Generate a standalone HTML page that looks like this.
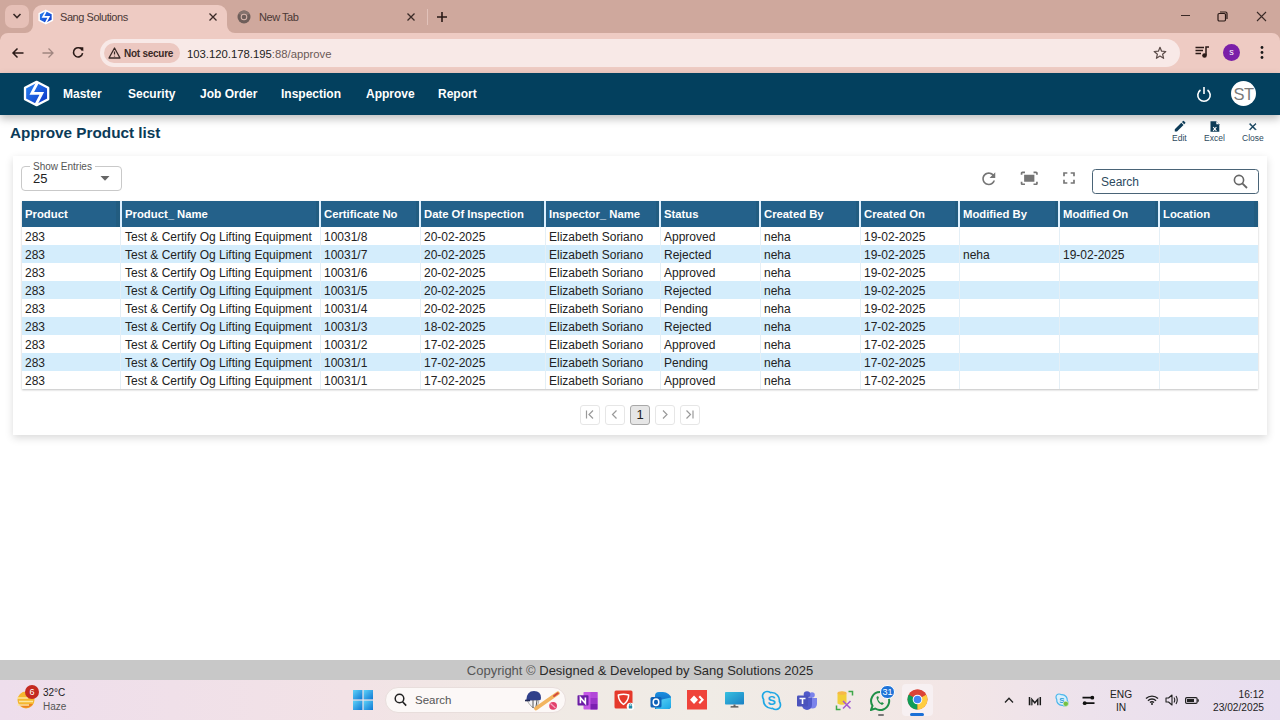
<!DOCTYPE html>
<html><head><meta charset="utf-8">
<style>
*{box-sizing:border-box;margin:0;padding:0}
html,body{width:1280px;height:720px;overflow:hidden;background:#fff;font-family:"Liberation Sans",sans-serif;position:relative}
.abs{position:absolute}
/* chrome */
#tabstrip{left:0;top:0;width:1280px;height:33px;background:#cfa89d}
#toolbar{left:0;top:33px;width:1280px;height:40px;background:#eecbc3}
#tab1{left:33px;top:5px;width:194px;height:28px;background:#eecbc3;border-radius:9px 9px 0 0}
#tabdd{left:5px;top:5px;width:24px;height:23px;background:#e6c0b7;border-radius:7px}
#addr{left:100px;top:39px;width:1080px;height:28px;background:#f8e9e7;border-radius:14px}
#chip{left:104px;top:43px;width:76px;height:20px;background:#ecc8c1;border-radius:10px}
.tabtxt{font-size:11px;color:#4a3835;letter-spacing:-0.45px}
/* nav */
#nav{left:0;top:73px;width:1280px;height:42px;background:#03405e;box-shadow:0 4px 8px rgba(0,0,0,.25)}
.navi{top:87px;font-size:12px;font-weight:700;color:#fff}
/* content */
#title{left:10px;top:123px;font-size:15.3px;font-weight:700;color:#0b3b58}
#card{left:13px;top:156px;width:1254px;height:279px;background:#fff;box-shadow:0 3px 8px rgba(0,0,0,.15)}
#tbl{left:22px;top:201px;width:1236px;height:188px;box-shadow:0 1px 2px rgba(0,0,0,.25);background:#fff}
.hd{position:absolute;left:0;top:0;width:1236px;height:26px;background:#24618a}
.th{position:absolute;top:0;height:26px;line-height:26px;padding-left:4px;font-size:11.3px;font-weight:700;color:#fff;white-space:nowrap;box-shadow:inset -4px 0 0 #225c80}
.th:last-of-type{box-shadow:none}
.sep{position:absolute;top:0;width:2px;height:26px;background:#dbefff;margin-left:-1px}
.tr{position:absolute;left:0;width:1236px;height:18px}
.tr.s{background:#d4edfc}
.td{position:absolute;top:1px;height:18px;line-height:19px;padding-left:4px;font-size:12px;color:#222;white-space:nowrap}
.vsep{position:absolute;top:0;width:1px;height:18px;background:#e4eff6}
.act{font-size:8.5px;color:#2d4a5e}
.pg{top:405px;width:20px;height:20px;border:1px solid #e6e6e6;border-radius:3px;overflow:hidden}
.pg svg{position:absolute;left:-1px;top:-1px}
#footer{left:0;top:660px;width:1280px;height:20px;background:#c8c8c8;font-size:13px;color:#2a2a2a;text-align:center;line-height:21px}
#taskbar{left:0;top:680px;width:1280px;height:40px;background:linear-gradient(90deg,#eedeec 0%,#f2e2e6 27%,#f0e9e4 40%,#f0ece6 55%,#f1e9e5 66%,#f3e6e6 74%,#ede2ec 85%,#e8def0 100%)}
</style></head><body>
<div id="tabstrip" class="abs"></div>
<div id="tabdd" class="abs"></div>
<div id="tab1" class="abs"></div>
<div id="toolbar" class="abs"></div>
<svg class="abs" style="left:0;top:20px" width="260" height="20" viewBox="0 20 260 20"><path d="M25 33 A8 8 0 0 0 33 25 L33 33 Z" fill="#eecbc3"/><path d="M235 33 A8 8 0 0 1 227 25 L227 33 Z" fill="#eecbc3"/><path d="M0 33 H8 A8 8 0 0 0 0 41 Z" fill="#cfa89d"/></svg>
<svg class="abs" style="left:1264px;top:33px" width="16" height="10" viewBox="0 0 16 10"><path d="M16 0 H8 A8 8 0 0 1 16 8 Z" fill="#cfa89d"/></svg>
<div id="addr" class="abs"></div>
<div id="chip" class="abs"></div>
<div class="abs tabtxt" style="left:60px;top:11px">Sang Solutions</div>
<div class="abs tabtxt" style="left:259px;top:11px">New Tab</div>
<div class="abs" style="left:124px;top:48px;font-size:10px;font-weight:700;color:#3a2a27;letter-spacing:-0.25px">Not secure</div>
<div class="abs" style="left:187px;top:47.5px;font-size:11.3px;color:#222">103.120.178.195<span style="color:#6b5a57">:88/approve</span></div>


<!-- tab dropdown chevron -->
<svg class="abs" style="left:11px;top:11px" width="12" height="10" viewBox="0 0 12 10"><path d="M2.5 3 L6 6.5 L9.5 3" fill="none" stroke="#3a2a27" stroke-width="1.6"/></svg>
<!-- favicon sang -->
<svg class="abs" style="left:38px;top:9px" width="16" height="16" viewBox="0 0 28 27"><defs><linearGradient id="lg2" x1="0" y1="0" x2="1" y2="1"><stop offset="0" stop-color="#2a8af5"/><stop offset="1" stop-color="#0d2fc4"/></linearGradient></defs><path d="M13.6 1.8 L25.2 7.8 L25.2 19.2 L13.6 25.2 L2 19.2 L2 7.8 Z" fill="url(#lg2)" stroke="#fff" stroke-width="2.6" stroke-linejoin="round"/><path d="M14.5 2.5 L8.8 13.3 H18.8 L13 24.5" fill="none" stroke="#fff" stroke-width="3"/></svg>
<!-- tab close -->
<svg class="abs" style="left:208px;top:12px" width="10" height="10" viewBox="0 0 10 10"><path d="M1.5 1.5 L8.5 8.5 M8.5 1.5 L1.5 8.5" stroke="#3a2a27" stroke-width="1.3"/></svg>
<svg class="abs" style="left:406px;top:12px" width="10" height="10" viewBox="0 0 10 10"><path d="M1.5 1.5 L8.5 8.5 M8.5 1.5 L1.5 8.5" stroke="#3a2a27" stroke-width="1.3"/></svg>
<!-- chrome logo new tab -->
<svg class="abs" style="left:237px;top:10px" width="14" height="14" viewBox="0 0 14 14"><circle cx="7" cy="7" r="6.5" fill="#6e5e5a"/><path d="M7 7 L12.6 3.75 A6.5 6.5 0 0 0 1.4 3.75 Z" fill="#84726d"/><circle cx="7" cy="7" r="3.3" fill="#d9b7ae"/><circle cx="7" cy="7" r="2.3" fill="#6e5e5a"/></svg>
<div class="abs" style="left:427px;top:9px;width:1px;height:16px;background:#e2c2ba"></div>
<svg class="abs" style="left:436px;top:11px" width="12" height="12" viewBox="0 0 12 12"><path d="M6 1 V11 M1 6 H11" stroke="#2a1a17" stroke-width="1.6"/></svg>
<!-- window controls -->
<div class="abs" style="left:1181px;top:15px;width:9px;height:1px;background:#3a2a27"></div>
<svg class="abs" style="left:1217px;top:11px" width="11" height="11" viewBox="0 0 11 11"><rect x="1" y="2.5" width="7.5" height="7.5" rx="1.2" fill="none" stroke="#2a1a17" stroke-width="1.2"/><path d="M3 1 H8.5 Q10 1 10 2.5 V8" fill="none" stroke="#2a1a17" stroke-width="1.2"/></svg>
<svg class="abs" style="left:1256px;top:11px" width="11" height="11" viewBox="0 0 11 11"><path d="M1 1 L10 10 M10 1 L1 10" stroke="#3a2a27" stroke-width="1.1"/></svg>
<!-- toolbar nav -->
<svg class="abs" style="left:11px;top:46px" width="14" height="14" viewBox="0 0 14 14"><path d="M12.5 7 H2 M6.5 2.5 L2 7 L6.5 11.5" fill="none" stroke="#2a1a17" stroke-width="1.5"/></svg>
<svg class="abs" style="left:41px;top:46px" width="14" height="14" viewBox="0 0 14 14"><path d="M1.5 7 H12 M7.5 2.5 L12 7 L7.5 11.5" fill="none" stroke="#a08680" stroke-width="1.3"/></svg>
<svg class="abs" style="left:71px;top:45px" width="14" height="14" viewBox="0 0 14 14"><path d="M11.3 5.5 A4.6 4.6 0 1 0 11.6 8.2" fill="none" stroke="#2a1a17" stroke-width="1.6"/><path d="M8.3 2.2 L12.3 2.2 L12.3 6.2 Z" fill="#2a1a17"/></svg>
<!-- warning triangle -->
<svg class="abs" style="left:108px;top:47px" width="13" height="12" viewBox="0 0 13 12"><path d="M6.5 1 L12 11 H1 Z" fill="none" stroke="#3a2a27" stroke-width="1.3" stroke-linejoin="round"/><path d="M6.5 4.5 V7.5 M6.5 8.8 V9.6" stroke="#3a2a27" stroke-width="1.2"/></svg>
<!-- star -->
<svg class="abs" style="left:1153px;top:46px" width="14" height="14" viewBox="0 0 14 14"><path d="M7 1.3 L8.6 5.2 L12.8 5.5 L9.6 8.2 L10.6 12.3 L7 10.1 L3.4 12.3 L4.4 8.2 L1.2 5.5 L5.4 5.2 Z" fill="none" stroke="#5a4a47" stroke-width="1.2" stroke-linejoin="round"/></svg>
<!-- media -->
<svg class="abs" style="left:1195px;top:46px" width="15" height="12" viewBox="0 0 15 12"><path d="M0.5 1.5 H9 M0.5 4.5 H8 M0.5 7.5 H6" stroke="#2a1a17" stroke-width="1.5"/><path d="M11 9 V1 H14" fill="none" stroke="#2a1a17" stroke-width="1.5"/><circle cx="9.5" cy="9.5" r="2.3" fill="#2a1a17"/></svg>
<div class="abs" style="left:1223px;top:44px;width:17px;height:17px;border-radius:50%;background:#7a1fa8;color:#fff;font-size:9px;text-align:center;line-height:17px">s</div>
<svg class="abs" style="left:1259px;top:45px" width="6" height="15" viewBox="0 0 6 15"><circle cx="3" cy="2.5" r="1.4" fill="#1a1a1a"/><circle cx="3" cy="7.5" r="1.4" fill="#1a1a1a"/><circle cx="3" cy="12.5" r="1.4" fill="#1a1a1a"/></svg>
<div id="nav" class="abs"></div>
<div class="abs navi" style="left:63px">Master</div>
<div class="abs navi" style="left:128px">Security</div>
<div class="abs navi" style="left:200px">Job Order</div>
<div class="abs navi" style="left:281px">Inspection</div>
<div class="abs navi" style="left:366px">Approve</div>
<div class="abs navi" style="left:438px">Report</div>


<svg class="abs" style="left:23px;top:80px" width="28" height="27" viewBox="0 0 28 27"><defs><linearGradient id="lg" x1="0" y1="0" x2="1" y2="1"><stop offset="0" stop-color="#2a8af5"/><stop offset="1" stop-color="#0d2fc4"/></linearGradient></defs><path d="M13.6 1.8 L25.2 7.8 L25.2 19.2 L13.6 25.2 L2 19.2 L2 7.8 Z" fill="url(#lg)" stroke="#fff" stroke-width="2.3" stroke-linejoin="round"/><path d="M14.5 2.5 L8.8 13.3 H18.8 L13 24.5" fill="none" stroke="#fff" stroke-width="2.8" stroke-linejoin="miter"/></svg>
<svg class="abs" style="left:1196px;top:86px" width="16" height="17" viewBox="0 0 16 17"><path d="M4.5 4 A6.2 6.2 0 1 0 11.5 4" fill="none" stroke="#fff" stroke-width="1.6"/><path d="M8 1 V8" stroke="#fff" stroke-width="1.6"/></svg>
<div class="abs" style="left:1231px;top:81px;width:25px;height:25px;border-radius:50%;background:#fff;color:#7a7a7a;font-size:16.5px;text-align:center;line-height:26px;letter-spacing:-0.5px">ST</div>
<div id="title" class="abs" style="top:124px">Approve Product list</div>
<div id="card" class="abs"></div>


<!-- action icons -->
<svg class="abs" style="left:1172.8px;top:119.2px" width="14.2" height="14.2" viewBox="0 0 24 24"><path d="M3 17.25V21h3.75L17.81 9.94l-3.75-3.75L3 17.25zM20.71 7.04c.39-.39.39-1.02 0-1.41l-2.34-2.34a.9959.9959 0 0 0-1.410 0l-1.83 1.83 3.75 3.75 1.83-1.83z" fill="#0d3b57"/></svg>
<div class="abs act" style="left:1172px;top:133px">Edit</div>
<svg class="abs" style="left:1210px;top:121px" width="10" height="11" viewBox="0 0 10 11"><path d="M0.5 0.3 H6.3 L9.3 3.3 V10.7 H0.5 Z" fill="#0d3b57"/><path d="M6.3 0.3 V3.3 H9.3 Z" fill="#fff"/><path d="M3.2 6 L6.4 9.8 M6.4 6 L3.2 9.8" stroke="#fff" stroke-width="1.1"/></svg>
<div class="abs act" style="left:1204px;top:133px">Excel</div>
<svg class="abs" style="left:1247px;top:121px" width="11.5" height="11.5" viewBox="0 0 24 24"><path d="M19 6.41L17.59 5 12 10.59 6.41 5 5 6.41 10.59 12 5 17.59 6.41 19 12 13.41 17.590 19 19 17.59 13.41 12z" fill="#0d3b57" stroke="#0d3b57" stroke-width="1.3"/></svg>
<div class="abs act" style="left:1242px;top:133px">Close</div>

<!-- show entries -->
<div class="abs" style="left:21px;top:166px;width:101px;height:25px;border:1px solid #c9c9c9;border-radius:4px"></div>
<div class="abs" style="left:30px;top:161px;padding:0 3px;background:#fff;font-size:10px;color:#555;line-height:11px">Show Entries</div>
<div class="abs" style="left:33px;top:171px;font-size:13px;color:#222">25</div>
<svg class="abs" style="left:100px;top:176px" width="10" height="5" viewBox="0 0 10 5"><path d="M0.5 0 L9.5 0 L5 4.8 Z" fill="#666"/></svg>

<!-- tools -->
<svg class="abs" style="left:979px;top:168.5px" width="19.5" height="19.5" viewBox="0 0 24 24"><path d="M17.65 6.35C16.2 4.9 14.21 4 12 4c-4.42 0-7.99 3.580-7.99 8s3.57 8 7.99 8c3.730 0 6.84-2.55 7.73-6h-2.08c-.82 2.33-3.04 4-5.65 4-3.31 0-6-2.69-6-6s2.69-6 6-6c1.66 0 3.14.69 4.22 1.78L13 11h7V4l-2.35 2.35z" fill="#757575"/></svg>
<svg class="abs" style="left:1018.5px;top:168px" width="20.5" height="20.5" viewBox="0 0 24 24"><path d="M17 4h3c1.1 0 2 .9 2 2v2h-2V6h-3V4zM4 8V6h3V4H4c-1.1 0-2 .9-2 2v2h2zm16 8v2h-3v2h3c1.1 0 2-.9 2-2v-2h-2zM7 18H4v-2H2v2c0 1.1.9 2 2 2h3v-2zM18 8H6v8h12V8z" fill="#757575"/></svg>
<svg class="abs" style="left:1059px;top:168px" width="20" height="20" viewBox="0 0 24 24"><path d="M7 14H5v5h5v-2H7v-3zm-2-4h2V7h3V5H5v5zm12 7h-3v2h5v-5h-2v3zM14 5v2h3v3h2V5h-5z" fill="#757575"/></svg>

<!-- search -->
<div class="abs" style="left:1092px;top:169px;width:167px;height:25px;border:1px solid #4a6477;border-radius:3.5px"></div>
<div class="abs" style="left:1101px;top:175px;font-size:12px;color:#2d4a5e">Search</div>
<svg class="abs" style="left:1233px;top:174px" width="15" height="15" viewBox="0 0 15 15"><circle cx="6" cy="6" r="4.6" fill="none" stroke="#666" stroke-width="1.6"/><path d="M9.3 9.3 L14 14" stroke="#666" stroke-width="1.8"/></svg>

<!-- pagination -->
<div class="abs pg" style="left:580px"><svg width="20" height="20" viewBox="0 0 20 20"><path d="M6.5 5.5 V13.5 M13 5.5 L9 9.5 L13 13.5" fill="none" stroke="#999" stroke-width="1.2"/></svg></div>
<div class="abs pg" style="left:605px"><svg width="20" height="20" viewBox="0 0 20 20"><path d="M11.5 5.5 L7.5 9.5 L11.5 13.5" fill="none" stroke="#999" stroke-width="1.2"/></svg></div>
<div class="abs pg" style="left:630px;background:#e6e6e6;border-color:#a8a8a8;font-size:13px;color:#222;text-align:center;line-height:18px">1</div>
<div class="abs pg" style="left:655px"><svg width="20" height="20" viewBox="0 0 20 20"><path d="M8 5.5 L12 9.5 L8 13.5" fill="none" stroke="#999" stroke-width="1.2"/></svg></div>
<div class="abs pg" style="left:680px"><svg width="20" height="20" viewBox="0 0 20 20"><path d="M6.5 5.5 L10.5 9.5 L6.5 13.5 M13 5.5 V13.5" fill="none" stroke="#999" stroke-width="1.2"/></svg></div>
<div id="tbl" class="abs">
<div class="hd">
<div class="th" style="left:0px;width:98px;padding-left:3px">Product</div>
<div class="th" style="left:99px;width:199px">Product_ Name</div>
<div class="th" style="left:298px;width:100px">Certificate No</div>
<div class="th" style="left:398px;width:125px">Date Of Inspection</div>
<div class="th" style="left:523px;width:115px">Inspector_ Name</div>
<div class="th" style="left:638px;width:100px">Status</div>
<div class="th" style="left:738px;width:100px">Created By</div>
<div class="th" style="left:838px;width:99px">Created On</div>
<div class="th" style="left:937px;width:100px">Modified By</div>
<div class="th" style="left:1037px;width:100px">Modified On</div>
<div class="th" style="left:1137px;width:99px">Location</div>
<div class="sep" style="left:99px"></div>
<div class="sep" style="left:298px"></div>
<div class="sep" style="left:398px"></div>
<div class="sep" style="left:523px"></div>
<div class="sep" style="left:638px"></div>
<div class="sep" style="left:738px"></div>
<div class="sep" style="left:838px"></div>
<div class="sep" style="left:937px"></div>
<div class="sep" style="left:1037px"></div>
<div class="sep" style="left:1137px"></div>
</div>
<div class="tr" style="top:26px">
<div class="td" style="left:0px;width:98px;padding-left:3px">283</div>
<div class="td" style="left:99px;width:199px">Test &amp; Certify Og Lifting Equipment</div>
<div class="td" style="left:298px;width:100px">10031/8</div>
<div class="td" style="left:398px;width:125px">20-02-2025</div>
<div class="td" style="left:523px;width:115px">Elizabeth Soriano</div>
<div class="td" style="left:638px;width:100px">Approved</div>
<div class="td" style="left:738px;width:100px">neha</div>
<div class="td" style="left:838px;width:99px">19-02-2025</div>
<div class="vsep" style="left:98px"></div>
<div class="vsep" style="left:298px"></div>
<div class="vsep" style="left:398px"></div>
<div class="vsep" style="left:523px"></div>
<div class="vsep" style="left:638px"></div>
<div class="vsep" style="left:738px"></div>
<div class="vsep" style="left:838px"></div>
<div class="vsep" style="left:937px"></div>
<div class="vsep" style="left:1037px"></div>
<div class="vsep" style="left:1137px"></div>
</div>
<div class="tr s" style="top:44px">
<div class="td" style="left:0px;width:98px;padding-left:3px">283</div>
<div class="td" style="left:99px;width:199px">Test &amp; Certify Og Lifting Equipment</div>
<div class="td" style="left:298px;width:100px">10031/7</div>
<div class="td" style="left:398px;width:125px">20-02-2025</div>
<div class="td" style="left:523px;width:115px">Elizabeth Soriano</div>
<div class="td" style="left:638px;width:100px">Rejected</div>
<div class="td" style="left:738px;width:100px">neha</div>
<div class="td" style="left:838px;width:99px">19-02-2025</div>
<div class="td" style="left:937px;width:100px">neha</div>
<div class="td" style="left:1037px;width:100px">19-02-2025</div>
<div class="vsep" style="left:98px"></div>
<div class="vsep" style="left:298px"></div>
<div class="vsep" style="left:398px"></div>
<div class="vsep" style="left:523px"></div>
<div class="vsep" style="left:638px"></div>
<div class="vsep" style="left:738px"></div>
<div class="vsep" style="left:838px"></div>
<div class="vsep" style="left:937px"></div>
<div class="vsep" style="left:1037px"></div>
<div class="vsep" style="left:1137px"></div>
</div>
<div class="tr" style="top:62px">
<div class="td" style="left:0px;width:98px;padding-left:3px">283</div>
<div class="td" style="left:99px;width:199px">Test &amp; Certify Og Lifting Equipment</div>
<div class="td" style="left:298px;width:100px">10031/6</div>
<div class="td" style="left:398px;width:125px">20-02-2025</div>
<div class="td" style="left:523px;width:115px">Elizabeth Soriano</div>
<div class="td" style="left:638px;width:100px">Approved</div>
<div class="td" style="left:738px;width:100px">neha</div>
<div class="td" style="left:838px;width:99px">19-02-2025</div>
<div class="vsep" style="left:98px"></div>
<div class="vsep" style="left:298px"></div>
<div class="vsep" style="left:398px"></div>
<div class="vsep" style="left:523px"></div>
<div class="vsep" style="left:638px"></div>
<div class="vsep" style="left:738px"></div>
<div class="vsep" style="left:838px"></div>
<div class="vsep" style="left:937px"></div>
<div class="vsep" style="left:1037px"></div>
<div class="vsep" style="left:1137px"></div>
</div>
<div class="tr s" style="top:80px">
<div class="td" style="left:0px;width:98px;padding-left:3px">283</div>
<div class="td" style="left:99px;width:199px">Test &amp; Certify Og Lifting Equipment</div>
<div class="td" style="left:298px;width:100px">10031/5</div>
<div class="td" style="left:398px;width:125px">20-02-2025</div>
<div class="td" style="left:523px;width:115px">Elizabeth Soriano</div>
<div class="td" style="left:638px;width:100px">Rejected</div>
<div class="td" style="left:738px;width:100px">neha</div>
<div class="td" style="left:838px;width:99px">19-02-2025</div>
<div class="vsep" style="left:98px"></div>
<div class="vsep" style="left:298px"></div>
<div class="vsep" style="left:398px"></div>
<div class="vsep" style="left:523px"></div>
<div class="vsep" style="left:638px"></div>
<div class="vsep" style="left:738px"></div>
<div class="vsep" style="left:838px"></div>
<div class="vsep" style="left:937px"></div>
<div class="vsep" style="left:1037px"></div>
<div class="vsep" style="left:1137px"></div>
</div>
<div class="tr" style="top:98px">
<div class="td" style="left:0px;width:98px;padding-left:3px">283</div>
<div class="td" style="left:99px;width:199px">Test &amp; Certify Og Lifting Equipment</div>
<div class="td" style="left:298px;width:100px">10031/4</div>
<div class="td" style="left:398px;width:125px">20-02-2025</div>
<div class="td" style="left:523px;width:115px">Elizabeth Soriano</div>
<div class="td" style="left:638px;width:100px">Pending</div>
<div class="td" style="left:738px;width:100px">neha</div>
<div class="td" style="left:838px;width:99px">19-02-2025</div>
<div class="vsep" style="left:98px"></div>
<div class="vsep" style="left:298px"></div>
<div class="vsep" style="left:398px"></div>
<div class="vsep" style="left:523px"></div>
<div class="vsep" style="left:638px"></div>
<div class="vsep" style="left:738px"></div>
<div class="vsep" style="left:838px"></div>
<div class="vsep" style="left:937px"></div>
<div class="vsep" style="left:1037px"></div>
<div class="vsep" style="left:1137px"></div>
</div>
<div class="tr s" style="top:116px">
<div class="td" style="left:0px;width:98px;padding-left:3px">283</div>
<div class="td" style="left:99px;width:199px">Test &amp; Certify Og Lifting Equipment</div>
<div class="td" style="left:298px;width:100px">10031/3</div>
<div class="td" style="left:398px;width:125px">18-02-2025</div>
<div class="td" style="left:523px;width:115px">Elizabeth Soriano</div>
<div class="td" style="left:638px;width:100px">Rejected</div>
<div class="td" style="left:738px;width:100px">neha</div>
<div class="td" style="left:838px;width:99px">17-02-2025</div>
<div class="vsep" style="left:98px"></div>
<div class="vsep" style="left:298px"></div>
<div class="vsep" style="left:398px"></div>
<div class="vsep" style="left:523px"></div>
<div class="vsep" style="left:638px"></div>
<div class="vsep" style="left:738px"></div>
<div class="vsep" style="left:838px"></div>
<div class="vsep" style="left:937px"></div>
<div class="vsep" style="left:1037px"></div>
<div class="vsep" style="left:1137px"></div>
</div>
<div class="tr" style="top:134px">
<div class="td" style="left:0px;width:98px;padding-left:3px">283</div>
<div class="td" style="left:99px;width:199px">Test &amp; Certify Og Lifting Equipment</div>
<div class="td" style="left:298px;width:100px">10031/2</div>
<div class="td" style="left:398px;width:125px">17-02-2025</div>
<div class="td" style="left:523px;width:115px">Elizabeth Soriano</div>
<div class="td" style="left:638px;width:100px">Approved</div>
<div class="td" style="left:738px;width:100px">neha</div>
<div class="td" style="left:838px;width:99px">17-02-2025</div>
<div class="vsep" style="left:98px"></div>
<div class="vsep" style="left:298px"></div>
<div class="vsep" style="left:398px"></div>
<div class="vsep" style="left:523px"></div>
<div class="vsep" style="left:638px"></div>
<div class="vsep" style="left:738px"></div>
<div class="vsep" style="left:838px"></div>
<div class="vsep" style="left:937px"></div>
<div class="vsep" style="left:1037px"></div>
<div class="vsep" style="left:1137px"></div>
</div>
<div class="tr s" style="top:152px">
<div class="td" style="left:0px;width:98px;padding-left:3px">283</div>
<div class="td" style="left:99px;width:199px">Test &amp; Certify Og Lifting Equipment</div>
<div class="td" style="left:298px;width:100px">10031/1</div>
<div class="td" style="left:398px;width:125px">17-02-2025</div>
<div class="td" style="left:523px;width:115px">Elizabeth Soriano</div>
<div class="td" style="left:638px;width:100px">Pending</div>
<div class="td" style="left:738px;width:100px">neha</div>
<div class="td" style="left:838px;width:99px">17-02-2025</div>
<div class="vsep" style="left:98px"></div>
<div class="vsep" style="left:298px"></div>
<div class="vsep" style="left:398px"></div>
<div class="vsep" style="left:523px"></div>
<div class="vsep" style="left:638px"></div>
<div class="vsep" style="left:738px"></div>
<div class="vsep" style="left:838px"></div>
<div class="vsep" style="left:937px"></div>
<div class="vsep" style="left:1037px"></div>
<div class="vsep" style="left:1137px"></div>
</div>
<div class="tr" style="top:170px">
<div class="td" style="left:0px;width:98px;padding-left:3px">283</div>
<div class="td" style="left:99px;width:199px">Test &amp; Certify Og Lifting Equipment</div>
<div class="td" style="left:298px;width:100px">10031/1</div>
<div class="td" style="left:398px;width:125px">17-02-2025</div>
<div class="td" style="left:523px;width:115px">Elizabeth Soriano</div>
<div class="td" style="left:638px;width:100px">Approved</div>
<div class="td" style="left:738px;width:100px">neha</div>
<div class="td" style="left:838px;width:99px">17-02-2025</div>
<div class="vsep" style="left:98px"></div>
<div class="vsep" style="left:298px"></div>
<div class="vsep" style="left:398px"></div>
<div class="vsep" style="left:523px"></div>
<div class="vsep" style="left:638px"></div>
<div class="vsep" style="left:738px"></div>
<div class="vsep" style="left:838px"></div>
<div class="vsep" style="left:937px"></div>
<div class="vsep" style="left:1037px"></div>
<div class="vsep" style="left:1137px"></div>
</div>
</div>

<div id="footer" class="abs"><span style="color:#555">Copyright ©</span> Designed &amp; Developed by Sang Solutions 2025</div>
<div id="taskbar" class="abs"></div>

<!-- taskbar items -->
<svg class="abs" style="left:16px;top:689px" width="22" height="21" viewBox="0 0 22 21"><circle cx="10" cy="11" r="8.5" fill="#f5b72f"/><path d="M3 15 A8.5 8.5 0 0 0 17 15 Z" fill="#ee7f22"/><path d="M1 9 H12 M3 12.5 H17 M1.5 16 H13" stroke="#fbe6a0" stroke-width="1.4"/></svg>
<div class="abs" style="left:25px;top:685px;width:14px;height:14px;border-radius:50%;background:#c42a21;color:#fff;font-size:9px;line-height:14px;text-align:center">6</div>
<div class="abs" style="left:43px;top:687px;font-size:10px;color:#1a1a1a">32°C</div>
<div class="abs" style="left:43px;top:701px;font-size:10px;color:#555">Haze</div>

<svg class="abs" style="left:353px;top:690px" width="20" height="20" viewBox="0 0 20 20"><defs><linearGradient id="wg" x1="0" y1="0" x2="1" y2="1"><stop offset="0" stop-color="#5fd3f8"/><stop offset="1" stop-color="#0f78d4"/></linearGradient></defs><rect x="0" y="0" width="9.4" height="9.4" fill="url(#wg)"/><rect x="10.6" y="0" width="9.4" height="9.4" fill="url(#wg)"/><rect x="0" y="10.6" width="9.4" height="9.4" fill="url(#wg)"/><rect x="10.6" y="10.6" width="9.4" height="9.4" fill="url(#wg)"/></svg>
<div class="abs" style="left:385px;top:687px;width:181px;height:26px;border-radius:13px;background:#fcf8f7;border:1px solid #e8dedc"></div>
<svg class="abs" style="left:394px;top:693px" width="13" height="14" viewBox="0 0 13 14"><circle cx="5.5" cy="5.5" r="4.3" fill="none" stroke="#222" stroke-width="1.5"/><path d="M8.6 8.8 L12.2 12.6" stroke="#222" stroke-width="1.6"/></svg>
<div class="abs" style="left:415px;top:694px;font-size:11.5px;color:#555">Search</div>
<svg class="abs" style="left:524px;top:689px" width="36" height="22" viewBox="0 0 36 22"><path d="M3 11 Q4 14 8 18 Q11 20 13 19 L15 11 Z" fill="#f4f4f6" stroke="#888" stroke-width="0.7"/><path d="M9 11 V19 M13 11 L12 18" stroke="#444" stroke-width="0.9"/><path d="M2.2 11.5 Q2.5 2 10 2 Q17 2 17 9 L16.5 11 Z" fill="#2f3f8a"/><path d="M1 11.5 H6" stroke="#222a55" stroke-width="1.6"/><path d="M33.8 4.3 L12 19.5" stroke="#f2b45e" stroke-width="3.8" stroke-linecap="round"/><path d="M33.8 4.3 L30 7" stroke="#d2473f" stroke-width="2" stroke-linecap="round"/><circle cx="29.1" cy="16.8" r="3.9" fill="#e2416b"/><path d="M26.5 14.5 L31.5 19" stroke="#f6a5c0" stroke-width="1.2"/></svg>

<svg class="abs" style="left:577px;top:691px" width="21" height="19" viewBox="0 0 21 19"><rect x="6.5" y="1" width="14" height="17.5" rx="0.8" fill="#c557e6"/><rect x="13.5" y="1" width="7" height="6" fill="#b247d8"/><rect x="13.5" y="7" width="7" height="6" fill="#9a34c8"/><rect x="13.5" y="13" width="7" height="5.5" fill="#7b1fb0"/><rect x="0.5" y="4.3" width="11" height="10.3" rx="0.8" fill="#6b1ca5"/><path d="M3.4 12.3 V6.6 L8.4 12.3 V6.6" fill="none" stroke="#fff" stroke-width="1.6" stroke-linejoin="miter"/></svg>
<svg class="abs" style="left:614px;top:690px" width="21" height="21" viewBox="0 0 21 21"><rect x="0.5" y="0.5" width="18" height="18" rx="1.5" fill="#e5392b"/><path d="M4.3 5 Q9.5 3.5 14.7 5 Q14.5 11 9.5 14.5 Q4.5 11 4.3 5 Z" fill="none" stroke="#fff" stroke-width="1.5" stroke-linejoin="round"/><circle cx="16.5" cy="16.5" r="3.8" fill="#fff"/><rect x="14.8" y="15.5" width="3.4" height="3" rx="0.6" fill="#1f8aa8"/><path d="M15.5 15.6 V14.8 A1 1 0 0 1 17.5 14.8 V15.6" fill="none" stroke="#1f8aa8" stroke-width="0.8"/></svg>
<svg class="abs" style="left:650px;top:691px" width="22" height="19" viewBox="0 0 22 19"><defs><linearGradient id="og" x1="0" y1="0" x2="0" y2="1"><stop offset="0" stop-color="#1a8fe0"/><stop offset="1" stop-color="#0b57b0"/></linearGradient><linearGradient id="og2" x1="0" y1="0" x2="1" y2="1"><stop offset="0" stop-color="#62d6f6"/><stop offset="1" stop-color="#1aa6e6"/></linearGradient></defs><path d="M5 5 Q5 1 9 1 H13 Q16 1 18.5 3 L21 5.5 V15 Q21 18 18 18 H5 Z" fill="url(#og)"/><path d="M5 10 L21 6.5 V15 Q21 18 18 18 H7 Q5 18 5 16 Z" fill="url(#og2)"/><rect x="0.5" y="6" width="11" height="10.5" rx="1.5" fill="#0f62b8"/><ellipse cx="6" cy="11.2" rx="2.8" ry="3.2" fill="none" stroke="#fff" stroke-width="1.5"/></svg>
<svg class="abs" style="left:687px;top:690px" width="21" height="20" viewBox="0 0 21 20"><rect x="0" y="0" width="20" height="19.5" fill="#ef443b"/><path d="M7 5.5 L11 9.75 L7 14 L3 9.75 Z M13 5.5 L17 9.75 L13 14 L11.5 12.5 L14.2 9.75 L11.5 7 Z" fill="#fff"/></svg>
<svg class="abs" style="left:725px;top:692px" width="19" height="16" viewBox="0 0 19 16"><defs><linearGradient id="mg" x1="0" y1="0" x2="1" y2="1"><stop offset="0" stop-color="#36c0e0"/><stop offset="1" stop-color="#1a80c4"/></linearGradient></defs><rect x="0" y="0" width="19" height="12.5" rx="0.8" fill="url(#mg)"/><rect x="8.5" y="12.5" width="2" height="2" fill="#666"/><rect x="5.5" y="14.3" width="8" height="1.3" rx="0.6" fill="#444"/></svg>
<svg class="abs" style="left:761px;top:690px" width="21" height="21" viewBox="0 0 21 21"><path d="M6 1.5 Q8 1.5 9.5 2.6 Q10 2.5 10.5 2.5 A8 8 0 0 1 18.4 11.5 Q19.5 13 19.5 15 A4.5 4.5 0 0 1 15 19.5 Q13 19.5 11.5 18.4 Q11 18.5 10.5 18.5 A8 8 0 0 1 2.6 9.5 Q1.5 8 1.5 6 A4.5 4.5 0 0 1 6 1.5 Z" fill="none" stroke="#1ea7e4" stroke-width="1.7"/><text x="10.6" y="15.2" font-size="12.5" font-weight="700" text-anchor="middle" fill="#1ea7e4" font-family="Liberation Sans">S</text></svg>
<svg class="abs" style="left:797px;top:691px" width="21" height="19" viewBox="0 0 21 19"><circle cx="15" cy="4" r="2.8" fill="#7b83eb"/><path d="M11 7 H20 V13 A4.5 4.5 0 0 1 11 13 Z" fill="#7b83eb"/><circle cx="10" cy="3.5" r="3.3" fill="#5059c9"/><path d="M5 6.5 H15 V14 A5 5 0 0 1 5 14 Z" fill="#5059c9"/><rect x="0" y="4.5" width="11" height="11" rx="1.2" fill="#4b53bc"/><path d="M2.5 7.5 H8.5 M5.5 7.5 V13" stroke="#fff" stroke-width="1.6"/></svg>
<svg class="abs" style="left:835px;top:690px" width="19" height="21" viewBox="0 0 19 21"><path d="M2.5 3 Q7 0.5 11.5 3 V13.5 Q7 16 2.5 13.5 Z" fill="#f2cf3a"/><ellipse cx="7" cy="3" rx="4.5" ry="1.8" fill="#f6b84a"/><path d="M13.5 1.5 H17.5 V5.5 M1.5 15.5 V19.5 H5.5" stroke="#3fa84a" stroke-width="1.5" fill="none"/><path d="M8 11 L15.5 18.5 M15.5 11 L8 18.5" stroke="#a25ad0" stroke-width="1.5"/></svg>
<svg class="abs" style="left:870px;top:691px" width="21" height="20" viewBox="0 0 21 20"><path d="M10 1 A9 9 0 1 1 5.2 17.5 L1 19 L2.5 14.8 A9 9 0 0 1 10 1 Z" fill="none" stroke="#1f9048" stroke-width="2"/><path d="M6.5 6 Q6.5 11 12 14 L14 12.5 L12 11 L11 12 Q8.5 10.5 8 8 L9 7 L8 5 Z" fill="#1f9048"/></svg>
<div class="abs" style="left:880px;top:685px;width:15px;height:14px;border-radius:7px;background:#1e73d8;border:1px solid #fff;color:#fff;font-size:9px;line-height:12px;text-align:center">31</div>
<div class="abs" style="left:878px;top:714px;width:6px;height:2px;border-radius:1px;background:#777"></div>
<div class="abs" style="left:902px;top:684px;width:31px;height:32px;border-radius:4px;background:#f7f0f2"></div>
<svg class="abs" style="left:907px;top:689px" width="21" height="21" viewBox="0 0 21 21"><circle cx="10.5" cy="10.5" r="10" fill="#db4437"/><path d="M10.5 10.5 L1.84 5.5 A10 10 0 0 0 10.5 20.5 Z" fill="#0f9d58"/><path d="M10.5 10.5 L10.5 20.5 A10 10 0 0 0 19.16 5.5 Z" fill="#ffcd40"/><path d="M10.5 10.5 L19.16 5.5 A10 10 0 0 0 1.84 5.5 Z" fill="#db4437"/><circle cx="10.5" cy="10.5" r="4.8" fill="#fff"/><circle cx="10.5" cy="10.5" r="3.8" fill="#4285f4"/></svg>
<div class="abs" style="left:910px;top:713px;width:14px;height:3px;border-radius:1.5px;background:#1a6fd6"></div>

<svg class="abs" style="left:1004px;top:697px" width="10" height="6" viewBox="0 0 10 6"><path d="M1 5.5 L5 1.3 L9 5.5" fill="none" stroke="#222" stroke-width="1.3"/></svg>
<svg class="abs" style="left:1028px;top:696px" width="14" height="10" viewBox="0 0 14 10"><path d="M1.5 1 V9.3 M12.3 1 V9.3" stroke="#1a1a1a" stroke-width="1.5"/><path d="M3.8 9.3 V3.3 L6.8 6.8 L9.8 3.3 V9.3" fill="none" stroke="#1a1a1a" stroke-width="1.4"/><path d="M3 3 V9.3" stroke="#777" stroke-width="1"/></svg>
<svg class="abs" style="left:1055px;top:693px" width="14" height="14" viewBox="0 0 21 21"><path d="M6 1.5 Q8 1.5 9.5 2.6 Q10 2.5 10.5 2.5 A8 8 0 0 1 18.4 11.5 Q19.5 13 19.5 15 A4.5 4.5 0 0 1 15 19.5 Q13 19.5 11.5 18.4 Q11 18.5 10.5 18.5 A8 8 0 0 1 2.6 9.5 Q1.5 8 1.5 6 A4.5 4.5 0 0 1 6 1.5 Z" fill="#d8effc" stroke="#4ab6ec" stroke-width="1.8"/><text x="10.2" y="14.6" font-size="12" font-weight="700" text-anchor="middle" fill="#2f9ed8" font-family="Liberation Sans">S</text><circle cx="16.2" cy="16.2" r="4" fill="#74c043" stroke="#eef6e4" stroke-width="0.9"/></svg>
<svg class="abs" style="left:1082px;top:695px" width="13" height="11" viewBox="0 0 13 11"><path d="M0.5 2.7 H12 M1 8.2 H12.5" stroke="#111" stroke-width="1.7"/><circle cx="10.3" cy="2.7" r="1.9" fill="#111"/><circle cx="2.7" cy="8.2" r="1.9" fill="#111"/></svg>
<div class="abs" style="left:1110px;top:688px;font-size:10.2px;color:#222;line-height:13px;text-align:center;width:22px">ENG<br>IN</div>
<svg class="abs" style="left:1145px;top:695px" width="14" height="10" viewBox="0 0 14 10"><path d="M1 3.6 A8.5 8.5 0 0 1 13 3.6 M3 5.7 A5.6 5.6 0 0 1 11 5.7 M5 7.6 A2.8 2.8 0 0 1 9 7.6" fill="none" stroke="#222" stroke-width="1.45"/><circle cx="7" cy="9" r="1" fill="#222"/></svg>
<svg class="abs" style="left:1165px;top:694px" width="14" height="12" viewBox="0 0 14 12"><path d="M1 4 H3.5 L7 1 V11 L3.5 8 H1 Z" fill="none" stroke="#222" stroke-width="1.1" stroke-linejoin="round"/><path d="M9 3.5 Q10.5 6 9 8.5 M11 2 Q13.5 6 11 10" fill="none" stroke="#222" stroke-width="1.1"/></svg>
<svg class="abs" style="left:1185px;top:697px" width="14" height="7" viewBox="0 0 14 7"><rect x="0.6" y="0.6" width="11.5" height="5.8" rx="1.2" fill="none" stroke="#222" stroke-width="1.2"/><rect x="2" y="2" width="7" height="3" fill="#222"/><rect x="12.5" y="2.3" width="1.3" height="2.4" fill="#222"/></svg>
<div class="abs" style="left:1200px;top:688px;width:64px;font-size:10.2px;color:#222;line-height:13px;text-align:right">16:12<br>23/02/2025</div>
</body></html>
